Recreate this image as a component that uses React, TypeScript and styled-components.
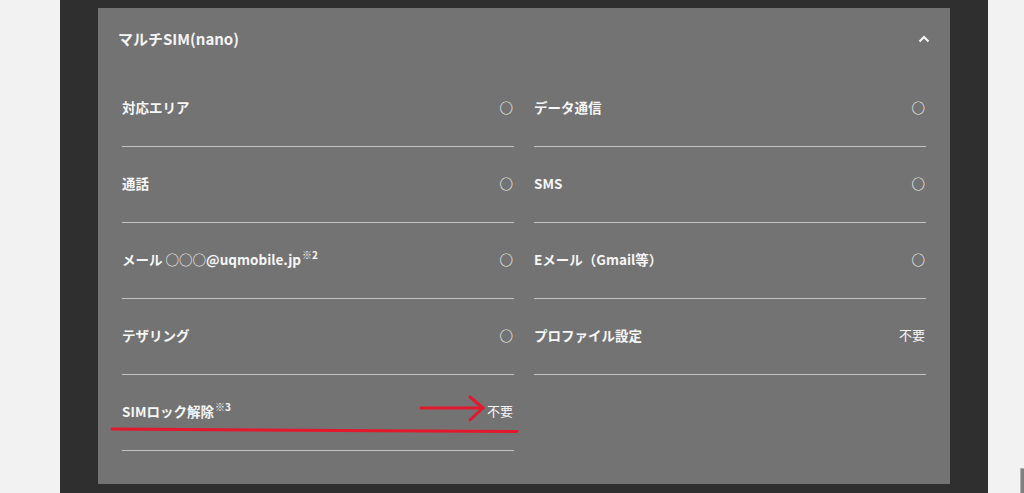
import React from "react";
import styled, { createGlobalStyle } from "styled-components";

const Global = createGlobalStyle`
  html, body { margin: 0; padding: 0; background: #f2f2f2; }
  body { font-family: "Noto Sans CJK JP", "Noto Sans", sans-serif; }
`;

const Page = styled.div`
  position: relative;
  width: 1024px;
  height: 493px;
  overflow: hidden;
  display: flex;
  padding-left: 60px;
  box-sizing: border-box;
  background: #f2f2f2;
`;

const DarkPanel = styled.div`
  width: 928px;
  height: 493px;
  box-sizing: border-box;
  background: #2f2f2f;
  padding: 8px 38px 0;
`;

const Card = styled.section`
  height: 476px;
  background: #737373;
  box-sizing: border-box;
`;

const Header = styled.div`
  height: 63px;
  display: flex;
  align-items: center;
  justify-content: space-between;
  padding: 0 20px 2px;
  box-sizing: border-box;
`;

const Title = styled.h2`
  margin: 0;
  font-size: 15px;
  font-weight: 700;
  color: #f4f4f4;
`;

const Chevron = styled.svg`
  width: 12px;
  height: 8px;
  display: block;
`;

const Grid = styled.div`
  display: grid;
  grid-template-columns: 392px 392px;
  column-gap: 20px;
  padding: 0 24px;
`;

const Row = styled.div`
  display: flex;
  align-items: center;
  justify-content: space-between;
  padding: 26px 0 29px;
  line-height: 20px;
  border-bottom: 1px solid #c4c4c4;
`;

const Label = styled.span`
  font-size: 13.5px;
  font-weight: 700;
  color: #f6f6f6;
`;

const Thin = styled.span`
  font-weight: 400;
`;

const Note = styled.sup`
  font-size: 10px;
  font-weight: 700;
  line-height: 0;
  vertical-align: 6px;
  margin-left: 1px;
`;

const Value = styled.span<{ $circle?: boolean }>`
  color: #f6f6f6;
  font-weight: ${(p) => (p.$circle ? 700 : 400)};
  font-size: ${(p) => (p.$circle ? "13.5px" : "13px")};
  margin-right: ${(p) => (p.$circle ? "1px" : "1px")};
`;

const Overlay = styled.svg`
  position: absolute;
  left: 0;
  top: 0;
  width: 1024px;
  height: 493px;
  pointer-events: none;
`;

const ScrollStub = styled.div`
  position: absolute;
  left: 1020px;
  top: 468px;
  width: 6px;
  height: 30px;
  background: #808080;
  border-top: 1px solid #b0b0b0;
  border-left: 1px solid #b0b0b0;
  box-sizing: border-box;
`;

type Item = { label: React.ReactNode; value: string } | null;

const items: Item[] = [
  { label: "対応エリア", value: "○" },
  { label: "データ通信", value: "○" },
  { label: "通話", value: "○" },
  { label: "SMS", value: "○" },
  {
    label: (
      <>
        メール <Thin>○○○</Thin>@uqmobile.jp<Note>※2</Note>
      </>
    ),
    value: "○",
  },
  { label: "Eメール（Gmail等）", value: "○" },
  { label: "テザリング", value: "○" },
  { label: "プロファイル設定", value: "不要" },
  {
    label: (
      <>
        SIMロック解除<Note>※3</Note>
      </>
    ),
    value: "不要",
  },
  null,
];

export default function App() {
  return (
    <>
      <Global />
      <Page>
        <DarkPanel>
          <Card>
            <Header>
              <Title>マルチSIM(nano)</Title>
              <Chevron viewBox="0 0 12 8">
                <path d="M1.5 6.5 L6 2 L10.5 6.5" fill="none" stroke="#f4f4f4" strokeWidth="2.2" />
              </Chevron>
            </Header>
            <Grid>
              {items.map((it, i) =>
                it ? (
                  <Row key={i}>
                    <Label>{it.label}</Label>
                    <Value $circle={it.value === "○"}>{it.value}</Value>
                  </Row>
                ) : (
                  <div key={i} />
                )
              )}
            </Grid>
          </Card>
        </DarkPanel>
        <Overlay viewBox="0 0 1024 493">
          <path d="M421 408 L483 408" stroke="#e3182d" strokeWidth="3" strokeLinecap="round" />
          <path d="M470 397 L483 408 L470 420" fill="none" stroke="#e3182d" strokeWidth="3" strokeLinecap="round" strokeLinejoin="round" />
          <path d="M112 429 L517 431.5" stroke="#e3182d" strokeWidth="3" strokeLinecap="round" />
        </Overlay>
        <ScrollStub />
      </Page>
    </>
  );
}
